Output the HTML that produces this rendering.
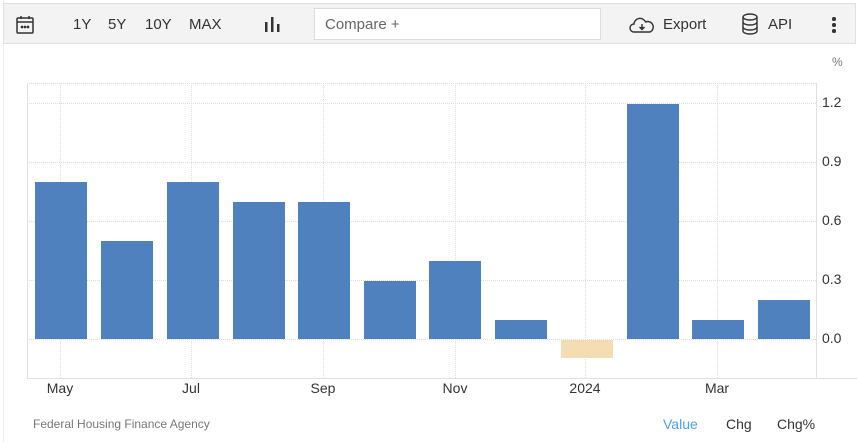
<!DOCTYPE html>
<html><head><style>
body{margin:0;width:857px;height:442px;background:#fff;font-family:"Liberation Sans",Arial,sans-serif;position:relative;overflow:hidden}
.a{position:absolute}
.tb{left:3px;top:3px;width:853px;height:41px;background:#f3f3f3;border:1px solid #e0e0e0;box-sizing:border-box}
.t{font-size:15px;color:#333}
.bar{position:absolute;background:#4e81bd;width:52px}
.yl{font-size:14px;color:#333;left:822px}
.xl{font-size:14px;color:#333;transform:translateX(-50%)}
.hg{position:absolute;left:27px;width:789px;border-top:1px dotted #ddd;height:0}
.vg{position:absolute;top:83px;height:295px;border-left:1px dotted #ddd;width:0}
</style></head><body>
<div class="a" style="left:3px;top:0;width:1px;height:442px;background:#eee"></div>
<div class="a tb"></div>
<svg class="a" style="left:15px;top:14px" width="20" height="22" viewBox="0 0 20 22" fill="none" stroke="#333" stroke-width="1.5"><rect x="2" y="4" width="16" height="15" rx="1"/><line x1="2" y1="8" x2="18" y2="8"/><line x1="6" y1="2" x2="6" y2="5"/><line x1="14" y1="2" x2="14" y2="5"/><circle cx="7" cy="13" r=".6" fill="#333"/><circle cx="10" cy="13" r=".6" fill="#333"/><circle cx="13" cy="13" r=".6" fill="#333"/></svg>
<div class="a t" style="left:73px;top:16px">1Y</div>
<div class="a t" style="left:108px;top:16px">5Y</div>
<div class="a t" style="left:145px;top:16px">10Y</div>
<div class="a t" style="left:189px;top:16px">MAX</div>
<svg class="a" style="left:264px;top:16px" width="18" height="16"><rect x="1" y="6" width="2.5" height="10" fill="#333"/><rect x="7" y="1" width="2.5" height="15" fill="#333"/><rect x="13" y="8" width="2.5" height="8" fill="#333"/></svg>
<div class="a" style="left:314px;top:8px;width:287px;height:32px;background:#fff;border:1px solid #ddd;box-sizing:border-box"></div>
<div class="a t" style="left:325px;top:16px;color:#666">Compare +</div>
<svg class="a" style="left:629px;top:15px" width="26" height="20" viewBox="0 0 26 20" fill="none" stroke="#333" stroke-width="1.4"><path d="M7 17H5a4 4 0 0 1 0-8 6 6 0 0 1 11.5-2A5 5 0 0 1 21 17H7z"/><line x1="13" y1="9" x2="13" y2="14"/><path d="M10.5 12l2.5 2.5 2.5-2.5" fill="#333"/></svg>
<div class="a t" style="left:663px;top:16px">Export</div>
<svg class="a" style="left:741px;top:13px" width="18" height="22" viewBox="0 0 18 22" fill="none" stroke="#333" stroke-width="1.4"><ellipse cx="9" cy="4" rx="7" ry="3"/><path d="M2 4v14c0 1.7 3 3 7 3s7-1.3 7-3V4"/><path d="M2 9c0 1.7 3 3 7 3s7-1.3 7-3M2 14c0 1.7 3 3 7 3s7-1.3 7-3"/></svg>
<div class="a t" style="left:768px;top:16px">API</div>
<div class="a" style="left:832px;top:17px;width:4px"><div style="width:3.5px;height:3.5px;border-radius:50%;background:#333;margin-bottom:2.5px"></div><div style="width:3.5px;height:3.5px;border-radius:50%;background:#333;margin-bottom:2.5px"></div><div style="width:3.5px;height:3.5px;border-radius:50%;background:#333"></div></div>
<div class="a" style="left:832px;top:55px;font-size:12px;color:#777">%</div>
<div class="hg" style="top:83px"></div>
<div class="hg" style="top:103px"></div><div class="hg" style="top:162px"></div><div class="hg" style="top:221px"></div><div class="hg" style="top:280px"></div><div class="hg" style="top:339px"></div>
<div class="vg" style="left:60px"></div><div class="vg" style="left:191px"></div><div class="vg" style="left:323px"></div><div class="vg" style="left:455px"></div><div class="vg" style="left:585px"></div><div class="vg" style="left:717px"></div>
<div class="a" style="left:27px;top:83px;width:1px;height:296px;background:#e0e0e0"></div>
<div class="a" style="left:27px;top:378px;width:830px;height:1px;background:#e0e0e0"></div>
<div class="a" style="left:816px;top:83px;width:1px;height:296px;background:#e0e0e0"></div>
<div class="bar" style="left:35px;top:182px;height:157px"></div>
<div class="bar" style="left:101px;top:241px;height:98px"></div>
<div class="bar" style="left:167px;top:182px;height:157px"></div>
<div class="bar" style="left:233px;top:202px;height:137px"></div>
<div class="bar" style="left:298px;top:202px;height:137px"></div>
<div class="bar" style="left:364px;top:281px;height:58px"></div>
<div class="bar" style="left:429px;top:261px;height:78px"></div>
<div class="bar" style="left:495px;top:320px;height:19px"></div>
<div class="bar" style="left:561px;top:340px;height:18px;background:#f5ddb3"></div>
<div class="bar" style="left:627px;top:104px;height:235px"></div>
<div class="bar" style="left:692px;top:320px;height:19px"></div>
<div class="bar" style="left:758px;top:300px;height:39px"></div>
<div class="a yl" style="top:94px">1.2</div>
<div class="a yl" style="top:153px">0.9</div>
<div class="a yl" style="top:212px">0.6</div>
<div class="a yl" style="top:271px">0.3</div>
<div class="a yl" style="top:330px">0.0</div>
<div class="a xl" style="left:60px;top:380px">May</div>
<div class="a xl" style="left:191px;top:380px">Jul</div>
<div class="a xl" style="left:323px;top:380px">Sep</div>
<div class="a xl" style="left:455px;top:380px">Nov</div>
<div class="a xl" style="left:585px;top:380px">2024</div>
<div class="a xl" style="left:717px;top:380px">Mar</div>
<div class="a" style="left:33px;top:417px;font-size:12px;color:#777">Federal Housing Finance Agency</div>
<div class="a" style="left:663px;top:416px;font-size:14px;color:#4a9ff5">Value</div>
<div class="a" style="left:726px;top:416px;font-size:14px;color:#333">Chg</div>
<div class="a" style="left:777px;top:416px;font-size:14px;color:#333">Chg%</div>
</body></html>
